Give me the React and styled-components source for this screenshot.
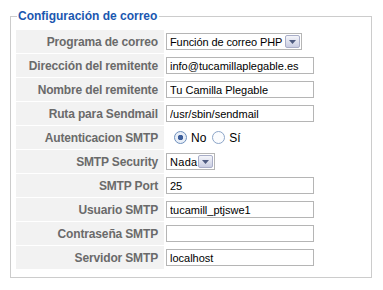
import React from 'react'
import styled, { createGlobalStyle } from 'styled-components'

const Global = createGlobalStyle`
  body {
    margin: 0;
    background: #fff;
    font-family: "Liberation Sans", Arial, sans-serif;
  }
`

/* styled-components */
const Wrap = styled.div`
  width: 383px;
  height: 290px;
  padding: 8px 0 0 10px;
  box-sizing: border-box;
`
const Box = styled.fieldset`
  width: 362px;
  height: 270px;
  box-sizing: border-box;
  margin: 0;
  padding: 5px 5px 0 5px;
  border: 1px solid #cccccc;
`
const Legend = styled.legend`
  padding: 0 2px 0 1px;
  margin-left: 1px;
  color: #1b57b0;
  font-size: 12px;
  font-weight: bold;
  line-height: 16px;
`
const Table = styled.table`
  border-collapse: separate;
  border-spacing: 0 1px;
  width: 100%;
`
const Label = styled.td`
  width: 142px;
  height: 23px;
  padding: 0 6px 0 0;
  background: #f2f2f2;
  color: #6a6a6a;
  font-size: 12px;
  font-weight: bold;
  letter-spacing: -0.15px;
  text-align: right;
  white-space: nowrap;
`
const Field = styled.td`
  padding: 0 0 0 2px;
  height: 23px;
`
const Input = styled.input`
  width: ${(props) => props.w || 148}px;
  height: 17px;
  box-sizing: border-box;
  border: 1px solid #b5b5b5;
  padding: 0 3px;
  font-family: "Liberation Sans", Arial, sans-serif;
  font-size: 11px;
  color: #000;
  display: block;
`
const Select = styled.div`
  display: flex;
  align-items: center;
  width: ${(props) => props.w}px;
  height: 17px;
  box-sizing: border-box;
  border: 1px solid #b5b5b5;
  padding-left: 3px;
  font-size: 11px;
  letter-spacing: ${(props) => props.sp || 0}px;
  white-space: nowrap;
  color: #000;
`
const SelectText = styled.span`
  flex: 1;
  overflow: hidden;
`
const Arrow = styled.span`
  flex: none;
  display: flex;
  align-items: center;
  justify-content: center;
  width: 15px;
  height: 13px;
  margin-right: 1px;
  border: 1px solid #a9aec8;
  border-radius: 2px;
  background: linear-gradient(#f4f5fa, #c9cde2);
  box-sizing: border-box;
`
const Radios = styled.div`
  display: flex;
  align-items: center;
  padding-left: 8px;
  font-size: 12px;
  color: #000;
`
const Radio = styled.span`
  width: 11px;
  height: 11px;
  border-radius: 50%;
  border: 1px solid ${(props) => (props.on ? '#6d8fbd' : '#8ca5c8')};
  background: ${(props) => (props.on ? 'radial-gradient(circle, #3d5e9b 0 2.5px, #e8eef7 3px)' : '#fbfcfe')};
  margin-right: 4px;
`
const RadioText = styled.span`
  margin-right: 6px;
`

function Down() {
  return (
    <Arrow>
      <svg width="7" height="4" viewBox="0 0 7 4">
        <path d="M0 0h7L3.5 4z" fill="#4d5a80" />
      </svg>
    </Arrow>
  )
}

const rows = [
  ['Dirección del remitente', 'info@tucamillaplegable.es'],
  ['Nombre del remitente', 'Tu Camilla Plegable'],
  ['Ruta para Sendmail', '/usr/sbin/sendmail'],
]
const rows2 = [
  ['SMTP Port', '25'],
  ['Usuario SMTP', 'tucamill_ptjswe1'],
  ['Contraseña SMTP', ''],
  ['Servidor SMTP', 'localhost'],
]

export default function App() {
  return (
    <Wrap>
      <Global />
      <Box>
        <Legend>Configuración de correo</Legend>
        <Table>
          <tbody>
            <tr>
              <Label>Programa de correo</Label>
              <Field>
                <Select w={136} sp={-0.1}>
                  <SelectText>Función de correo PHP</SelectText>
                  <Down />
                </Select>
              </Field>
            </tr>
            {rows.map((r) => (
              <tr key={r[0]}>
                <Label>{r[0]}</Label>
                <Field><Input defaultValue={r[1]} /></Field>
              </tr>
            ))}
            <tr>
              <Label>Autenticacion SMTP</Label>
              <Field>
                <Radios>
                  <Radio on />
                  <RadioText>No</RadioText>
                  <Radio />
                  <RadioText>Sí</RadioText>
                </Radios>
              </Field>
            </tr>
            <tr>
              <Label>SMTP Security</Label>
              <Field>
                <Select w={49} sp={0.3}>
                  <SelectText>Nada</SelectText>
                  <Down />
                </Select>
              </Field>
            </tr>
            {rows2.map((r) => (
              <tr key={r[0]}>
                <Label>{r[0]}</Label>
                <Field><Input defaultValue={r[1]} /></Field>
              </tr>
            ))}
          </tbody>
        </Table>
      </Box>
    </Wrap>
  )
}
